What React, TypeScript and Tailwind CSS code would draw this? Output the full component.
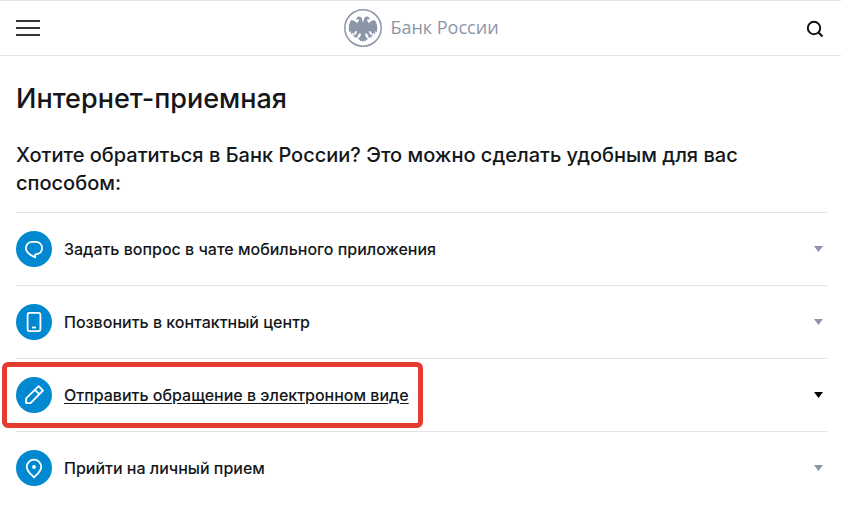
import React, { useState } from 'react';
import clsx from 'clsx';

type IconProps = { className?: string };

const Stroke = ({ children }: { children: React.ReactNode }) => (
  <svg
    viewBox="0 0 36 36"
    className="h-9 w-9"
    fill="none"
    stroke="currentColor"
    strokeWidth="1.8"
    strokeLinejoin="round"
    aria-hidden="true"
  >
    {children}
  </svg>
);

const ChatIcon = () => (
  <Stroke>
    <path d="M19.200 23.300V26.300C15.800 24.900 12.600 23 11 20.600C10.200 19.400 9.900 18.200 9.900 17C9.900 13.500 12.800 10.900 16.300 10.900H19.700C23.300 10.900 26.100 13.500 26.100 17C26.100 20.600 23.400 23.300 19.200 23.300Z" />
  </Stroke>
);

const PhoneIcon = () => (
  <Stroke>
    <rect x="11.600" y="8.900" width="12.800" height="18.200" rx="1.800" />
    <path d="M16 23.500h4" />
  </Stroke>
);

const PencilIcon = () => (
  <Stroke>
    <path d="M10.100 26.100v-4.700L22.600 9.200l4.300 4.300L14.600 26.100zM18.900 12.900l4.300 4.300" />
  </Stroke>
);

const PinIcon = () => (
  <Stroke>
    <path d="M18 27.300c-2.600-2.700-7.200-6-7.200-10.400a7.200 7.200 0 0 1 14.400 0c0 4.400-4.600 7.700-7.200 10.400z" />
    <circle cx="18" cy="17" r="1.900" fill="currentColor" stroke="none" />
  </Stroke>
);

// Половина орла, вторая получается зеркально
const EAGLE_HALF =
  'M19.100 13.200C18.300 12.300 18.400 11.200 17.900 9.800C17.400 8.200 16.200 7.300 14.800 7.500C13.700 7.700 13 8.300 12.700 9.200L11.800 10.500L14.200 10.200C14.900 10.500 14.900 11.400 14.500 12.300C14.100 13.200 13.400 13.700 13 14.300C12 12.400 9.600 11.100 7 11.300C5.400 13.700 4.600 16.500 4.800 19.700L5.100 23.300L6.500 22L7.100 25.500L8.700 23.400L9.400 25.700L11.100 22.600L13.300 22.100L12.600 24.300L11 26L8.400 26.300L10.700 27.200L9.800 28.800L12.200 28L13.300 29.300L13.900 26.300L15.500 24.300L17 25L16.200 27.800L13.900 30.100L15.600 30.700L16.200 32.200L17.900 31.600L19.100 33.200Z';

const Emblem = ({ className }: IconProps) => (
  <svg viewBox="0 0 38 38" className={className} fill="currentColor" aria-hidden="true">
    <circle cx="19" cy="19" r="18.200" fill="none" stroke="currentColor" strokeWidth="1.500" />
    <path d={EAGLE_HALF} />
    <path d={EAGLE_HALF} transform="translate(38 0) scale(-1 1)" />
  </svg>
);

const items = [
  { id: 'chat', title: 'Задать вопрос в чате мобильного приложения', icon: ChatIcon },
  { id: 'phone', title: 'Позвонить в контактный центр', icon: PhoneIcon },
  { id: 'request', title: 'Отправить обращение в электронном виде', icon: PencilIcon },
  { id: 'visit', title: 'Прийти на личный прием', icon: PinIcon },
];

const Header = () => (
  <header className="flex h-14 items-center justify-between border-y border-[#e3e4e6] pr-3.5 pl-4">
    <button type="button" aria-label="Меню" className="flex w-6 flex-col gap-[5px]">
      <span className="h-0.5 bg-[#35353a]" />
      <span className="h-0.5 bg-[#35353a]" />
      <span className="h-0.5 bg-[#35353a]" />
    </button>
    <a href="#" className="flex items-center gap-2 text-[#8d96a8]">
      <Emblem className="h-[38px] w-[38px]" />
      <span className="pb-0.5 font-['Open_Sans',sans-serif] text-lg leading-6 font-normal">Банк России</span>
    </a>
    <button type="button" aria-label="Поиск" className="text-[#111]">
      <svg viewBox="0 0 24 24" className="h-6 w-6" fill="none" stroke="currentColor" strokeWidth="2" aria-hidden="true">
        <circle cx="11" cy="12" r="6.200" />
        <path d="M15.500 16.500l4 4" strokeWidth="2.200" />
      </svg>
    </button>
  </header>
);

export default function App() {
  const [active, setActive] = useState('request');

  return (
    <div className="bg-white font-['Inter',sans-serif] text-[#14171a]">
      <Header />
      <main className="pt-[25px] pr-3.5 pl-4">
        <h1 className="text-[27px] leading-9 font-medium">Интернет-приемная</h1>
        <h2 className="mt-6 text-xl leading-7 font-medium">
          Хотите обратиться в Банк России? Это можно сделать удобным для вас способом:
        </h2>
        <ul className="mt-[15px]">
          {items.map(({ id, title, icon: Icon }) => {
            const selected = id === active;
            return (
              <li key={id} className="border-t border-[#e3e4e6]">
                <button
                  type="button"
                  onClick={() => setActive(id)}
                  className="flex w-full items-center justify-between py-[18px] pr-1 text-left"
                >
                  <span className="relative flex items-center gap-3">
                    <span className="rounded-full bg-[#0088d0] text-white">
                      <Icon />
                    </span>
                    <span className={clsx('text-base leading-6 font-medium', selected && 'underline underline-offset-2')}>
                      {title}
                    </span>
                    {selected && (
                      <span className="pointer-events-none absolute -inset-x-[14px] -inset-y-[15px] rounded-md border-5 border-[#e63c30]" />
                    )}
                  </span>
                  <svg
                    viewBox="0 0 9 6"
                    className={clsx('h-1.5 w-[9px]', selected ? 'text-black' : 'text-[#8d96a8]')}
                    fill="currentColor"
                    aria-hidden="true"
                  >
                    <path d="M0 0h9L4.500 6z" />
                  </svg>
                </button>
              </li>
            );
          })}
        </ul>
      </main>
    </div>
  );
}
